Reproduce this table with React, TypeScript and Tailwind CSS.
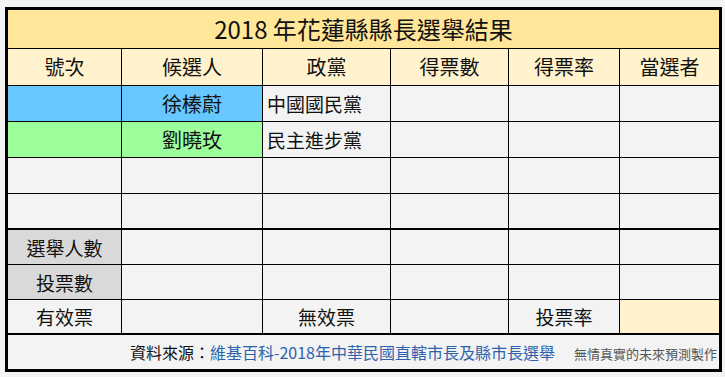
const font = { fontFamily: '"Noto Sans CJK TC", "Noto Sans", sans-serif' };

// border-box widths, each includes its 1px right border
const cols = ['w-[114px]', 'w-[141px]', 'w-[128px]', 'w-[118px]', 'w-[111px]', 'w-[99px]'];

type Cell = { text?: string; bg?: string; align?: 'left' | 'center'; size?: string };

function Row({ cells, h, border }: { cells: Cell[]; h: string; border: string }) {
  return (
    <div className={`flex ${h} ${border} border-black`}>
      {cells.map((c, i) => (
        <div
          key={i}
          className={`${cols[i]} shrink-0 flex items-center leading-none ${
            c.align === 'left' ? 'justify-start pl-[4px]' : 'justify-center'
          } ${c.size ?? 'text-[19px]'} ${c.bg ?? 'bg-[#f3f3f3]'} ${
            i < cells.length - 1 ? 'border-r border-black' : ''
          } text-[#111]`}
        >
          {c.text}
        </div>
      ))}
    </div>
  );
}

const empty = (): Cell[] => Array.from({ length: 6 }, () => ({}));

export default function App() {
  const header: Cell[] = ['號次', '候選人', '政黨', '得票數', '得票率', '當選者'].map((t) => ({
    text: t,
    bg: 'bg-[#fff2cc]',
    size: 'text-[20px]',
  }));

  const kmt: Cell[] = [
    { bg: 'bg-[#66c8ff]' },
    { text: '徐榛蔚', bg: 'bg-[#66c8ff]', size: 'text-[20px]' },
    { text: '中國國民黨', align: 'left' },
    {},
    {},
    {},
  ];
  const dpp: Cell[] = [
    { bg: 'bg-[#9cff9c]' },
    { text: '劉曉玫', bg: 'bg-[#9cff9c]', size: 'text-[20px]' },
    { text: '民主進步黨', align: 'left' },
    {},
    {},
    {},
  ];
  const voters: Cell[] = [{ text: '選舉人數', bg: 'bg-[#d9d9d9]' }, {}, {}, {}, {}, {}];
  const ballots: Cell[] = [{ text: '投票數', bg: 'bg-[#d9d9d9]' }, {}, {}, {}, {}, {}];
  const valid: Cell[] = [
    { text: '有效票' },
    {},
    { text: '無效票' },
    {},
    { text: '投票率' },
    { bg: 'bg-[#fff2cc]' },
  ];

  return (
    <div className="w-[725px] h-[377px] bg-[#f3f3f3] pt-[7px] pl-[5px]" style={font}>
      <div className="w-[717px] border-[3px] border-black bg-[#f3f3f3]">
        <div className="h-[39px] flex items-center justify-center bg-[#ffe699] border-b border-black text-[24px] leading-none text-[#111]">
          2018 年花蓮縣縣長選舉結果
        </div>
        <Row cells={header} h="h-[37px]" border="border-b" />
        <Row cells={kmt} h="h-[36px]" border="border-b" />
        <Row cells={dpp} h="h-[36px]" border="border-b" />
        <Row cells={empty()} h="h-[36px]" border="border-b" />
        <Row cells={empty()} h="h-[36px]" border="border-b-2" />
        <Row cells={voters} h="h-[35px]" border="border-b" />
        <Row cells={ballots} h="h-[35px]" border="border-b" />
        <Row cells={valid} h="h-[35px]" border="border-b-2" />
        <div className="h-[34px] flex items-center justify-end pr-[2px] leading-none">
          <span className="text-[16px] text-[#111]">資料來源：</span>
          <span className="text-[16px] text-[#2f62ad]">維基百科-2018年中華民國直轄市長及縣市長選舉</span>
          <span className="ml-[19px] text-[13px] text-[#555] mt-[2px]">無情真實的未來預測製作</span>
        </div>
      </div>
    </div>
  );
}
